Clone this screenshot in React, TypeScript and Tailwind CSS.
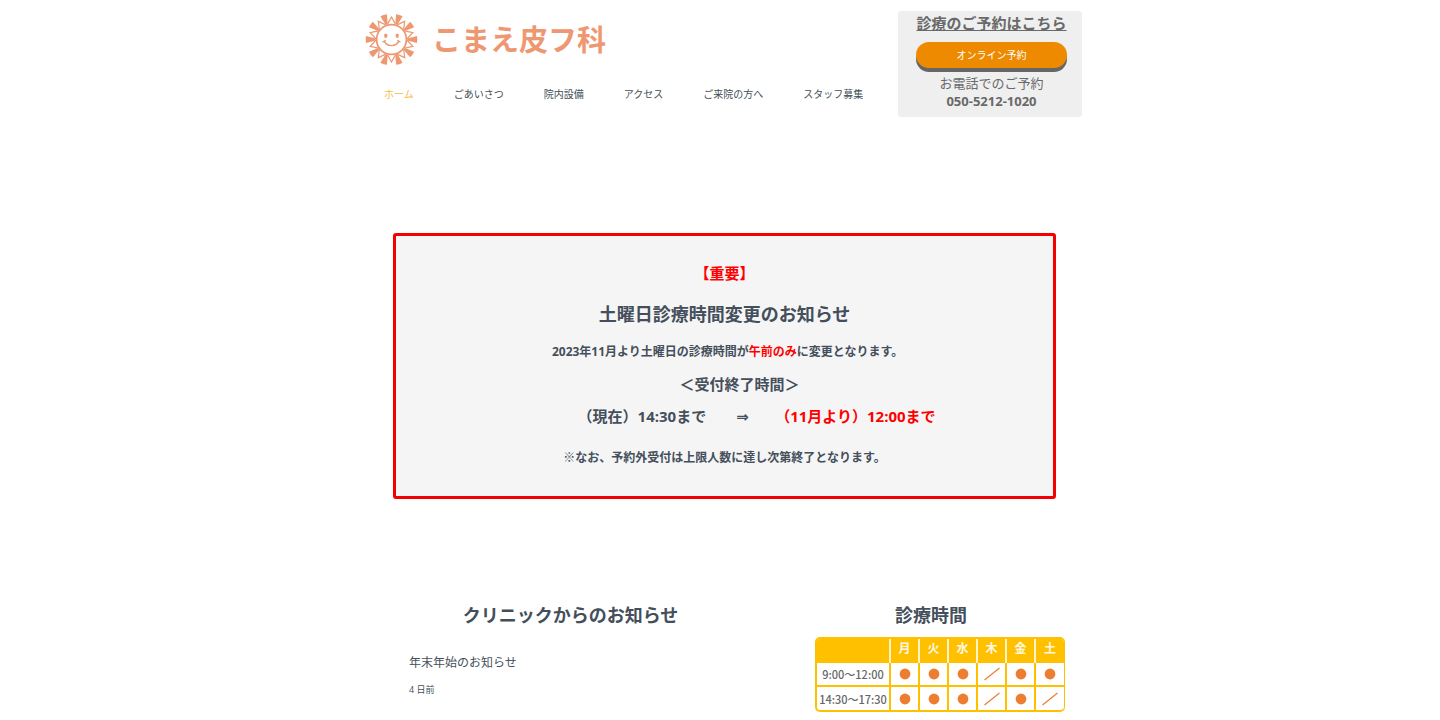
const wedges = [0, 36, 72, 108, 144, 180, 216, 252, 288, 324];

const navItems = ['ホーム', 'ごあいさつ', '院内設備', 'アクセス', 'ご来院の方へ', 'スタッフ募集'];

const days = ['月', '火', '水', '木', '金', '土'];

const hours = [
  { time: '9:00～12:00', open: [true, true, true, false, true, true] },
  { time: '14:30～17:30', open: [true, true, true, false, true, false] },
];

function SunLogo() {
  return (
    <svg viewBox="-26 -26 52 52" className="h-[53px] w-[53px] text-[#ee9872]" aria-hidden="true">
      {wedges.map((angle) => (
        <g key={angle} transform={`rotate(${angle})`}>
          <path d="M15.5 -1.1 L25 -3.4 Q25.8 0 25 3.4 L15.5 1.1 Z" fill="currentColor" />
          <path
            d="M14.8 -4 L22 0 L14.8 4"
            transform="rotate(18)"
            fill="none"
            stroke="currentColor"
            strokeWidth="1.2"
            strokeLinejoin="miter"
          />
        </g>
      ))}
      <circle r="14.6" fill="white" stroke="currentColor" strokeWidth="1.7" />
      <ellipse cx="-5.6" cy="-3.6" rx="1.6" ry="2.2" fill="currentColor" />
      <ellipse cx="5.6" cy="-3.6" rx="1.6" ry="2.2" fill="currentColor" />
      <path
        d="M-7.2 1.6 Q-5 6 0 6 Q5 6 7.2 1.6 M-8.3 2.3 L-6.2 1.1 M8.3 2.3 L6.2 1.1"
        fill="none"
        stroke="currentColor"
        strokeWidth="1.4"
        strokeLinecap="round"
      />
    </svg>
  );
}

function Mark({ open }: { open: boolean }) {
  return (
    <svg viewBox="0 0 18 14" className="mx-auto block h-[14px] w-[18px]" role="img" aria-label={open ? '診療' : '休診'}>
      {open ? (
        <circle cx="9" cy="7" r="5.4" fill="#ed7d31" />
      ) : (
        <path d="M1.5 13 L16.5 1" stroke="#ed7d31" strokeWidth="1.3" />
      )}
    </svg>
  );
}

function Header() {
  return (
    <header className="flex items-start justify-between pt-[11px]">
      <div className="pl-[7px] pt-[2px]">
        <a href="#home" className="flex items-center gap-[14px]">
          <SunLogo />
          <span className="text-[29px] leading-[40px] font-bold text-[#ee9872]">こまえ皮フ科</span>
        </a>
        <nav className="mt-5 flex gap-10 pl-[19px] text-[10px] leading-4">
          {navItems.map((item, i) => (
            <a key={item} href={`#page-${i}`} className={i === 0 ? 'text-[#f5bd45]' : 'text-[#424f57]'}>
              {item}
            </a>
          ))}
        </nav>
      </div>
      <div className="flex w-[184px] flex-col items-center rounded-[3px] bg-[#efefef] pb-[7px] pl-[3px] text-[#696969]">
        <p className="text-[15px] leading-6 font-bold underline">診療のご予約はこちら</p>
        <button
          type="button"
          className="mt-[7px] h-[26px] w-[151px] rounded-[13px] bg-[#ee8a00] text-[10px] leading-6 text-white shadow-[0_4px_0_#666]"
        >
          オンライン予約
        </button>
        <p className="mt-[6px] text-[13px] leading-[18px]">お電話でのご予約</p>
        <p className="text-[13px] leading-[18px] font-bold">050-5212-1020</p>
      </div>
    </header>
  );
}

function Notice() {
  return (
    <section className="mr-[26px] ml-[35px] mt-[116px] rounded-[3px] border-[3px] border-[#f40000] bg-[#f5f5f5] pt-[25px] pb-[26px] text-center font-bold whitespace-pre text-[#444f5b]">
      <p className="text-[15px] leading-6 text-[#ff0000]">【重要】</p>
      <h2 className="mt-[15px] text-[18px] leading-7">土曜日診療時間変更のお知らせ</h2>
      <p className="mt-3 text-[12px] leading-6">
        {'  2023年11月より土曜日の診療時間が'}
        <span className="text-[#ff0000]">午前のみ</span>に変更となります。
      </p>
      <p className="mt-2 text-[15px] leading-6">{'\u3000\u3000＜受付終了時間＞'}</p>
      <p className="mt-2 text-[15px] leading-6">
        {'   \u3000\u3000\u3000\u3000（現在）14:30まで\u3000\u3000'}
        <span className="font-['DejaVu_Sans',sans-serif]">⇒</span>
        {' \u3000\u3000'}
        <span className="text-[#ff0000]">（11月より）12:00まで</span>
      </p>
      <p className="mt-[17px] text-[12px] leading-6">※なお、予約外受付は上限人数に達し次第終了となります。</p>
    </section>
  );
}

function News() {
  return (
    <section className="w-[323px]">
      <h2 className="text-center text-[18px] leading-7 font-bold">クリニックからのお知らせ</h2>
      <article className="mt-6">
        <a href="#news" className="block text-[12px] leading-5">
          年末年始のお知らせ
        </a>
        <p className="mt-[9px] text-[9px] leading-4">4 日前</p>
      </article>
    </section>
  );
}

function Hours() {
  return (
    <section className="w-[250px]">
      <h2 className="pr-[18px] text-center text-[18px] leading-7 font-bold">診療時間</h2>
      <div className="mt-2 overflow-hidden rounded-[5px] border-2 border-r border-[#ffc000]">
        <table className="w-full table-fixed border-collapse">
          <thead>
            <tr className="h-6 bg-[#ffc000] text-[12px] leading-4 text-[#fff8e0]">
              <th className="w-[73px]" aria-label="時間" />
              {days.map((day) => (
                <th key={day} className="border-l-2 border-[#fff3cc] p-0 pb-1 font-bold">
                  {day}
                </th>
              ))}
            </tr>
          </thead>
          <tbody className="font-['Noto_Sans_CJK_JP',sans-serif]">
            {hours.map((row, r) => (
              <tr key={row.time} className={r === 0 ? 'h-[23px]' : 'h-6 border-t-2 border-[#ffc000]'}>
                <th scope="row" className="p-0 text-[11px] leading-4 font-medium whitespace-nowrap text-[#666]">
                  {row.time}
                </th>
                {row.open.map((open, i) => (
                  <td key={days[i]} className="border-l-2 border-[#ffc000] p-0">
                    <Mark open={open} />
                  </td>
                ))}
              </tr>
            ))}
          </tbody>
        </table>
      </div>
    </section>
  );
}

export default function App() {
  return (
    <div
      lang="ja"
      className="mx-auto max-w-[724px] font-['Open_Sans','Noto_Sans_CJK_JP',sans-serif] text-[#444f5b]"
    >
      <Header />
      <main>
        <Notice />
        <div className="mt-[102px] flex items-start justify-between pr-[17px] pl-[51px]">
          <News />
          <Hours />
        </div>
      </main>
    </div>
  );
}
